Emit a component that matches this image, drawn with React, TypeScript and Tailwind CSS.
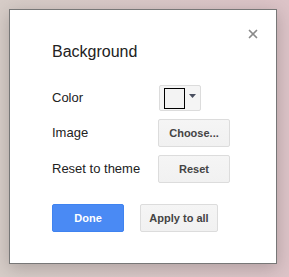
import { X } from "lucide-react";

const grayBtn =
  "h-7 rounded-[2px] border border-[#dcdcdc] bg-gradient-to-b from-[#f5f5f5] to-[#f1f1f1] text-[11px] font-bold text-[#444]";

const App = () => {
  return (
    <div
      className="h-[277px] w-[289px] overflow-hidden bg-gradient-to-r from-[#d6ccc7] to-[#dcc3c7] pt-[9px] pl-[9px]"
      style={{ fontFamily: "Arial, 'Liberation Sans', sans-serif" }}
    >
      {/* Dialog box */}
      <div className="relative h-[255px] w-[268px] border border-[#777] bg-white pt-[32px] pl-[42px] shadow-[0_4px_16px_rgba(0,0,0,0.2)]">
        {/* Close */}
        <button className="absolute top-[17px] right-[16px] text-[#8a8a8a]">
          <X size={14} strokeWidth={3} />
        </button>

        <h1 className="text-[16px] leading-5 text-[#222]">Background</h1>

        <div className="mt-[23px] grid grid-cols-[106px_auto] items-center gap-y-2 text-[13px] text-[#222]">
          <span>Color</span>
          <button className="ml-px flex h-[26px] w-[42px] items-center rounded-[2px] border border-[#dcdcdc] bg-[#f5f5f5] pl-1">
            <span className="block h-[21px] w-[21px] border border-black bg-[#f3f3f3]" />
            <svg width="7" height="4" viewBox="0 0 7 4" className="ml-[4px] mb-[4px]">
              <path d="M0 0h7L3.5 4z" fill="#4a4f60" />
            </svg>
          </button>

          <span>Image</span>
          <button className={`${grayBtn} w-[72px]`}>Choose...</button>

          <span>Reset to theme</span>
          <button className={`${grayBtn} w-[72px]`}>Reset</button>
        </div>

        {/* Footer buttons */}
        <div className="mt-[21px] flex gap-4">
          <button className="h-7 w-[72px] rounded-[2px] border border-[#3f83f0] bg-[#4a8af4] text-[11px] font-bold text-white">
            Done
          </button>
          <button className={`${grayBtn} px-2 w-[78px]`}>Apply to all</button>
        </div>
      </div>
    </div>
  );
};

export default App;
